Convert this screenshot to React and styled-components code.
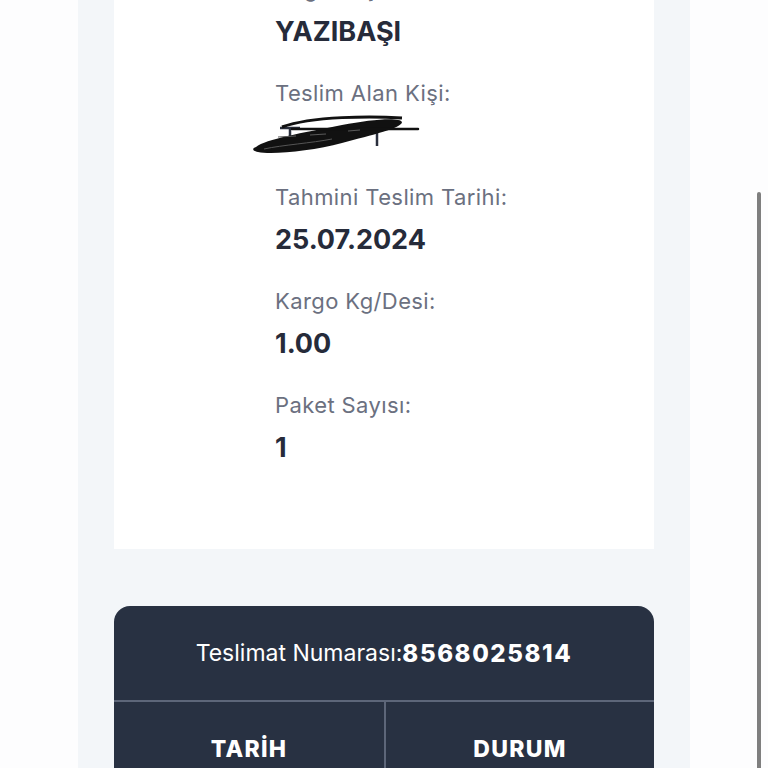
import React from 'react'
import styled, {createGlobalStyle} from 'styled-components'

const GlobalStyle = createGlobalStyle`
  html, body {
    margin: 0;
    padding: 0;
    background-color: #fdfdfe;
    overflow: hidden;
  }
  body {
    font-family: Inter, "Noto Sans", sans-serif;
    -webkit-font-smoothing: antialiased;
  }
`

const Page = styled.div`
  width: 612px;
  margin: -60px 0 0 78px;
  padding: 0 36px 40px;
  box-sizing: border-box;
  background-color: #f3f6f9;
  display: flex;
  flex-direction: column;
  gap: 57px;
`

const Card = styled.div`
  display: flex;
  flex-direction: column;
  gap: 29px;
  padding: 34px 0 84px 161px;
  background-color: #ffffff;
`

const Field = styled.div`
  display: flex;
  flex-direction: column;
`

const Label = styled.span`
  font-size: 22px;
  line-height: 30px;
  font-weight: 400;
  letter-spacing: 0.4px;
  color: #6b7080;
`

const Value = styled.span`
  margin-top: 11px;
  font-size: 27px;
  line-height: 34px;
  font-weight: 700;
  color: #262b3a;
`

const Scribble = styled.svg`
  display: block;
  margin: 11px 0 0 -23px;
  overflow: visible;
`

const Table = styled.div`
  background-color: #283142;
  border-radius: 16px 16px 0 0;
  overflow: hidden;
  color: #ffffff;
`

const TableTitle = styled.div`
  height: 94px;
  display: flex;
  align-items: center;
  justify-content: center;
  font-size: 23px;
  font-weight: 400;
  border-bottom: 2px solid #5d6679;
  b {
    font-size: 24px;
    font-weight: 800;
    letter-spacing: 1.6px;
  }
`

const HeadRow = styled.div`
  display: grid;
  grid-template-columns: 1fr 1fr;
`

const HeadCell = styled.div`
  height: 94px;
  display: flex;
  align-items: center;
  justify-content: center;
  font-size: 23px;
  font-weight: 800;
  letter-spacing: 1.3px;
  & + & {
    border-left: 2px solid #5d6679;
  }
`

const ScrollThumb = styled.div`
  position: fixed;
  left: 757px;
  top: 192px;
  width: 4px;
  height: 620px;
  border-radius: 2px;
  background-color: #7f7f7f;
`

const fields = [
  {label: 'Tahmini Teslim Tarihi:', value: '25.07.2024'},
  {label: 'Kargo Kg/Desi:', value: '1.00'},
  {label: 'Paket Sayısı:', value: '1'},
]

const NameScribble = () => (
  <Scribble width="170" height="34" viewBox="0 0 170 34">
    <path d="M28 9 L48 9 M38 9 L38 26" stroke="#2a2f3d" strokeWidth="2.5" />
    <path d="M125 10 L125 27" stroke="#2a2f3d" strokeWidth="2.5" />
    <path
      d="M4 28 C 14 20, 50 14, 90 6 C 120 0, 148 -2, 150 3 C 150 9, 120 16, 90 24 C 60 32, 20 36, 6 33 C 0 32, 0 29, 4 28 Z"
      fill="#111"
    />
    <path d="M30 8 C 60 -3, 120 -3, 150 -1" stroke="#111" strokeWidth="3" fill="none" />
    <path d="M40 10 L166 10" stroke="#111" strokeWidth="2.5" strokeLinecap="round" />
    <path d="M26 18 L44 17 M58 16 L74 15 M96 12 L108 11" stroke="#5a5a5a" strokeWidth="1.2" />
    <path d="M12 30 C 30 26, 60 24, 80 20" stroke="#555" strokeWidth="1" fill="none" />
  </Scribble>
)

export default function App() {
  return (
    <>
      <GlobalStyle />
      <Page>
        <Card>
          <Field>
            <Label>Dağıtım Şubesi:</Label>
            <Value>YAZIBAŞI</Value>
          </Field>
          <Field>
            <Label>Teslim Alan Kişi:</Label>
            <NameScribble />
          </Field>
          {fields.map((f) => (
            <Field key={f.label}>
              <Label>{f.label}</Label>
              <Value>{f.value}</Value>
            </Field>
          ))}
        </Card>
        <Table>
          <TableTitle>
            Teslimat Numarası:<b>8568025814</b>
          </TableTitle>
          <HeadRow>
            <HeadCell>TARİH</HeadCell>
            <HeadCell>DURUM</HeadCell>
          </HeadRow>
        </Table>
      </Page>
      <ScrollThumb />
    </>
  )
}
